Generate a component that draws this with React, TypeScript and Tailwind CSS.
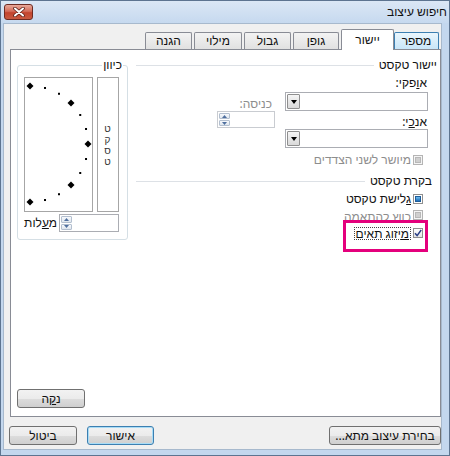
import React from 'react';

type BoxState = 'mixed' | 'checked';

function CheckBox({ state, disabled }: { state: BoxState; disabled?: boolean }) {
  if (state === 'checked') {
    return (
      <span className="flex h-[10px] w-[10px] shrink-0 items-center justify-center border border-[#8f8f8f] bg-linear-to-b from-[#ffffff] to-[#e4e4e4]">
        <svg width="8" height="8" viewBox="0 0 8 8">
          <path d="M1 4.2 L3.1 6.6 L7.2 1" fill="none" stroke="#2a3f86" strokeWidth="1.5" />
        </svg>
      </span>
    );
  }
  return (
    <span
      className={`flex h-[10px] w-[10px] shrink-0 items-center justify-center border ${
        disabled ? 'border-[#b4b4b4] bg-[#f4f4f4]' : 'border-[#8f8f8f] bg-white'
      }`}
    >
      <span
        className={`h-[6px] w-[6px] ${
          disabled
            ? 'border border-[#b8b8b8] bg-[#cfcfcf]'
            : 'border border-[#1f5d99] bg-linear-to-b from-[#6cbcef] to-[#1d6db8]'
        }`}
      />
    </span>
  );
}

function SpinBox({ size, disabled }: { size: string; disabled?: boolean }) {
  return (
    <div
      className={`flex ${size} border bg-white ${
        disabled ? 'border-[#c9ccd1]' : 'border-[#abadb3]'
      }`}
    >
      <div className="flex-1" />
      <div className="flex w-[13px] flex-col gap-px p-px">
        <div className="flex flex-1 items-center justify-center rounded-[1px] border border-[#b3bfcf] bg-linear-to-b from-[#f7f9fc] to-[#dfe6ee]">
          <svg width="5" height="3" viewBox="0 0 5 3">
            <path d="M2.5 0 L5 3 L0 3Z" fill="#4f6f9f" />
          </svg>
        </div>
        <div className="flex flex-1 items-center justify-center rounded-[1px] border border-[#b3bfcf] bg-linear-to-b from-[#f7f9fc] to-[#dfe6ee]">
          <svg width="5" height="3" viewBox="0 0 5 3">
            <path d="M0 0 L5 0 L2.5 3Z" fill="#4f6f9f" />
          </svg>
        </div>
      </div>
    </div>
  );
}

function Combo() {
  return (
    <div className="flex h-[19px] w-[143px] border border-[#abadb3] bg-white">
      <div className="flex-1" />
      <div className="m-px flex w-[13px] items-center justify-center rounded-[1px] border border-[#8f8f8f] bg-linear-to-b from-[#f5f5f5] to-[#d9d9d9]">
        <svg width="6" height="4" viewBox="0 0 6 4">
          <path d="M0 0 L6 0 L3 4Z" fill="#000" />
        </svg>
      </div>
    </div>
  );
}

function Heading({ text, inset }: { text: string; inset: string }) {
  return (
    <div className="flex h-[14px] items-center">
      <span className={inset}>{text}</span>
      <div className="mr-[5px] h-px flex-1 bg-[#dde1e6]" />
    </div>
  );
}

// orientation half-dial: big diamonds every 45°, small dots in between
function Dial() {
  const cx = 5;
  const cy = 66;
  const r = 58;
  const big = [90, 45, 0, -45, -90];
  const small = [75, 60, 30, 15, -15, -30, -60, -75];
  const pt = (deg: number) => {
    const a = (deg * Math.PI) / 180;
    return [cx + r * Math.cos(a), cy - r * Math.sin(a)];
  };
  return (
    <svg width="67" height="133" viewBox="0 0 67 133">
      {small.map((d) => {
        const [x, y] = pt(d);
        return <rect key={d} x={x - 1} y={y - 1} width="2" height="2" fill="#000" />;
      })}
      {big.map((d) => {
        const [x, y] = pt(d);
        return (
          <polygon
            key={d}
            points={`${x},${y - 3.5} ${x + 3.5},${y} ${x},${y + 3.5} ${x - 3.5},${y}`}
            fill="#000"
          />
        );
      })}
    </svg>
  );
}

const BTN =
  'h-[19px] rounded-[3px] border text-center leading-[17px] bg-[linear-gradient(#f2f2f2_0%,#ebebeb_50%,#dddddd_50%,#cfcfcf_100%)]';

const TAB =
  'h-[17px] rounded-t-[2px] border border-b-0 border-[#898c95] bg-linear-to-b from-[#f3f3f3] to-[#e1e1e1] text-center leading-[16px]';

export default function App() {
  return (
    <div
      dir="rtl"
      className="flex h-[456px] w-[450px] flex-col overflow-hidden border border-[#5d7490] bg-[#c3d7ee] font-['Noto_Sans',sans-serif] text-[12px] leading-[14px] text-[#111]"
    >
      {/* title bar */}
      <div className="flex h-[22px] shrink-0 items-center justify-between bg-linear-to-b from-[#dbe7f5] to-[#c6d9ef] pl-[3px] pr-[2px]">
        <span>חיפוש עיצוב</span>
        <div className="flex h-[16px] w-[29px] items-center justify-center rounded-[3px] border border-[#6e2b22] bg-[linear-gradient(#e9a99a_0%,#d46d5a_45%,#c3442e_55%,#c85a41_100%)]">
          <svg width="12" height="10" viewBox="0 0 12 10">
            <path d="M2 1.5 L10 8.5 M10 1.5 L2 8.5" stroke="#5a2018" strokeWidth="3.6" strokeLinecap="round" />
            <path d="M2 1.5 L10 8.5 M10 1.5 L2 8.5" stroke="#ffffff" strokeWidth="2" strokeLinecap="round" />
          </svg>
        </div>
      </div>

      {/* client area */}
      <div className="mb-[5px] ml-[2px] mr-[7px] flex flex-1 flex-col border border-[#a7b9cd] bg-[#f0f0f0]">
        {/* tabs */}
        <div className="mr-[2px] mt-[5px] flex h-[20px] items-end">
          <div className="h-[17px] w-[45px] rounded-t-[2px] border border-b-0 border-[#3c7fb1] bg-linear-to-b from-[#eaf6fd] to-[#c9e6f8] text-center leading-[16px]">
            מספר
          </div>
          <div className="relative z-10 -mb-px ml-[2px] h-[21px] w-[53px] rounded-t-[2px] border border-b-0 border-[#898c95] bg-white text-center leading-[19px]">
            יישור
          </div>
          <div className={`${TAB} ml-[2px] w-[46px]`}>גופן</div>
          <div className={`${TAB} ml-[2px] w-[47px]`}>גבול</div>
          <div className={`${TAB} ml-[2px] w-[48px]`}>מילוי</div>
          <div className={`${TAB} w-[47px]`}>הגנה</div>
        </div>

        {/* tab panel */}
        <div className="relative ml-[6px] flex h-[368px] flex-col border border-[#898c95] bg-white">
          <div className="flex justify-between pl-[6px] pr-[3px] pt-[8px]">
            {/* alignment + text control */}
            <div className="w-[301px]">
              <Heading text="יישור טקסט" inset="" />
              <div className="flex pr-[9px]">
                <div className="w-[143px]">
                  <div className="mt-[4px] h-[14px] pr-px">
                    א<u>ו</u>פקי:
                  </div>
                  <div className="mt-[2px]">
                    <Combo />
                  </div>
                  <div className="mt-[4px] h-[14px] pr-px">
                    אנ<u>כ</u>י:
                  </div>
                  <Combo />
                  <div className="mt-[5px] flex h-[14px] items-center gap-[2px] pr-[5px] text-[#8d8d8d]">
                    <CheckBox state="mixed" disabled />
                    <span>מיושר לשני הצדדים</span>
                  </div>
                </div>
                <div className="mr-[10px]">
                  <div className="mt-[25px] h-[14px] pr-[3px] text-[#8d8d8d]">כניסה:</div>
                  <SpinBox size="h-[17px] w-[58px]" disabled />
                </div>
              </div>

              <div className="mt-[7px]">
                <Heading text="בקרת טקסט" inset="mr-[5px]" />
              </div>
              <div className="pr-[14px]">
                <div className="mt-[4px] flex h-[14px] items-center gap-[2px]">
                  <CheckBox state="mixed" />
                  <span>
                    <u>ג</u>לישת טקסט
                  </span>
                </div>
                <div className="mt-[2px] flex h-[14px] items-center gap-[2px] text-[#8d8d8d]">
                  <CheckBox state="mixed" disabled />
                  <span className="translate-y-[2px] [clip-path:inset(4px_0_0_0)]">כווץ להתאמה</span>
                </div>
                <div className="mt-[4px] flex h-[14px] items-center gap-[2px]">
                  <CheckBox state="checked" />
                  <span className="border border-dotted border-[#444] px-px leading-[11px]">
                    <u>מ</u>יזוג תאים
                  </span>
                </div>
              </div>
            </div>

            {/* orientation */}
            <fieldset className="m-0 w-[111px] min-w-0 rounded-[3px] border border-[#d5dfe5] pb-[4px] pl-[6px] pr-[8px]">
              <legend className="-mr-[4px] px-px leading-[14px]">כיוון</legend>
              <div className="mt-[5px] flex h-[135px] gap-[4px]">
                <div className="flex w-[22px] items-center justify-center border border-[#a6a6a6] bg-white text-[10px] leading-[10px] text-[#333]">
                  <span
                    dir="ltr"
                    className="[unicode-bidi:bidi-override] [writing-mode:vertical-lr] [text-orientation:upright]"
                  >
                    טקסט
                  </span>
                </div>
                <div className="w-[69px] border border-[#a6a6a6] bg-white">
                  <Dial />
                </div>
              </div>
              <div className="mt-[2px] flex items-center gap-[2px]">
                <SpinBox size="h-[18px] w-[60px]" />
                <span>
                  מ<u>ע</u>לות
                </span>
              </div>
            </fieldset>
          </div>

          <button
            type="button"
            className={`${BTN} mb-[8px] ml-[6px] mt-auto w-[68px] self-end border-[#707070]`}
          >
            נ<u>ק</u>ה
          </button>

          {/* highlight annotation */}
          <div className="absolute left-[332px] top-[170px] h-[32px] w-[85px] border-[3px] border-[#e4007c]" />
        </div>

        {/* dialog buttons */}
        <div className="ml-[5px] mt-[9px] flex justify-between">
          <button type="button" className={`${BTN} w-[112px] border-[#707070]`}>
            בחירת עיצוב מתא...
          </button>
          <div className="flex gap-[10px]">
            <button
              type="button"
              className={`${BTN} w-[67px] border-[#3c7fb1] shadow-[inset_0_0_0_1px_#a8dcf6]`}
            >
              אישור
            </button>
            <button type="button" className={`${BTN} w-[68px] border-[#707070]`}>
              ביטול
            </button>
          </div>
        </div>
      </div>
    </div>
  );
}
